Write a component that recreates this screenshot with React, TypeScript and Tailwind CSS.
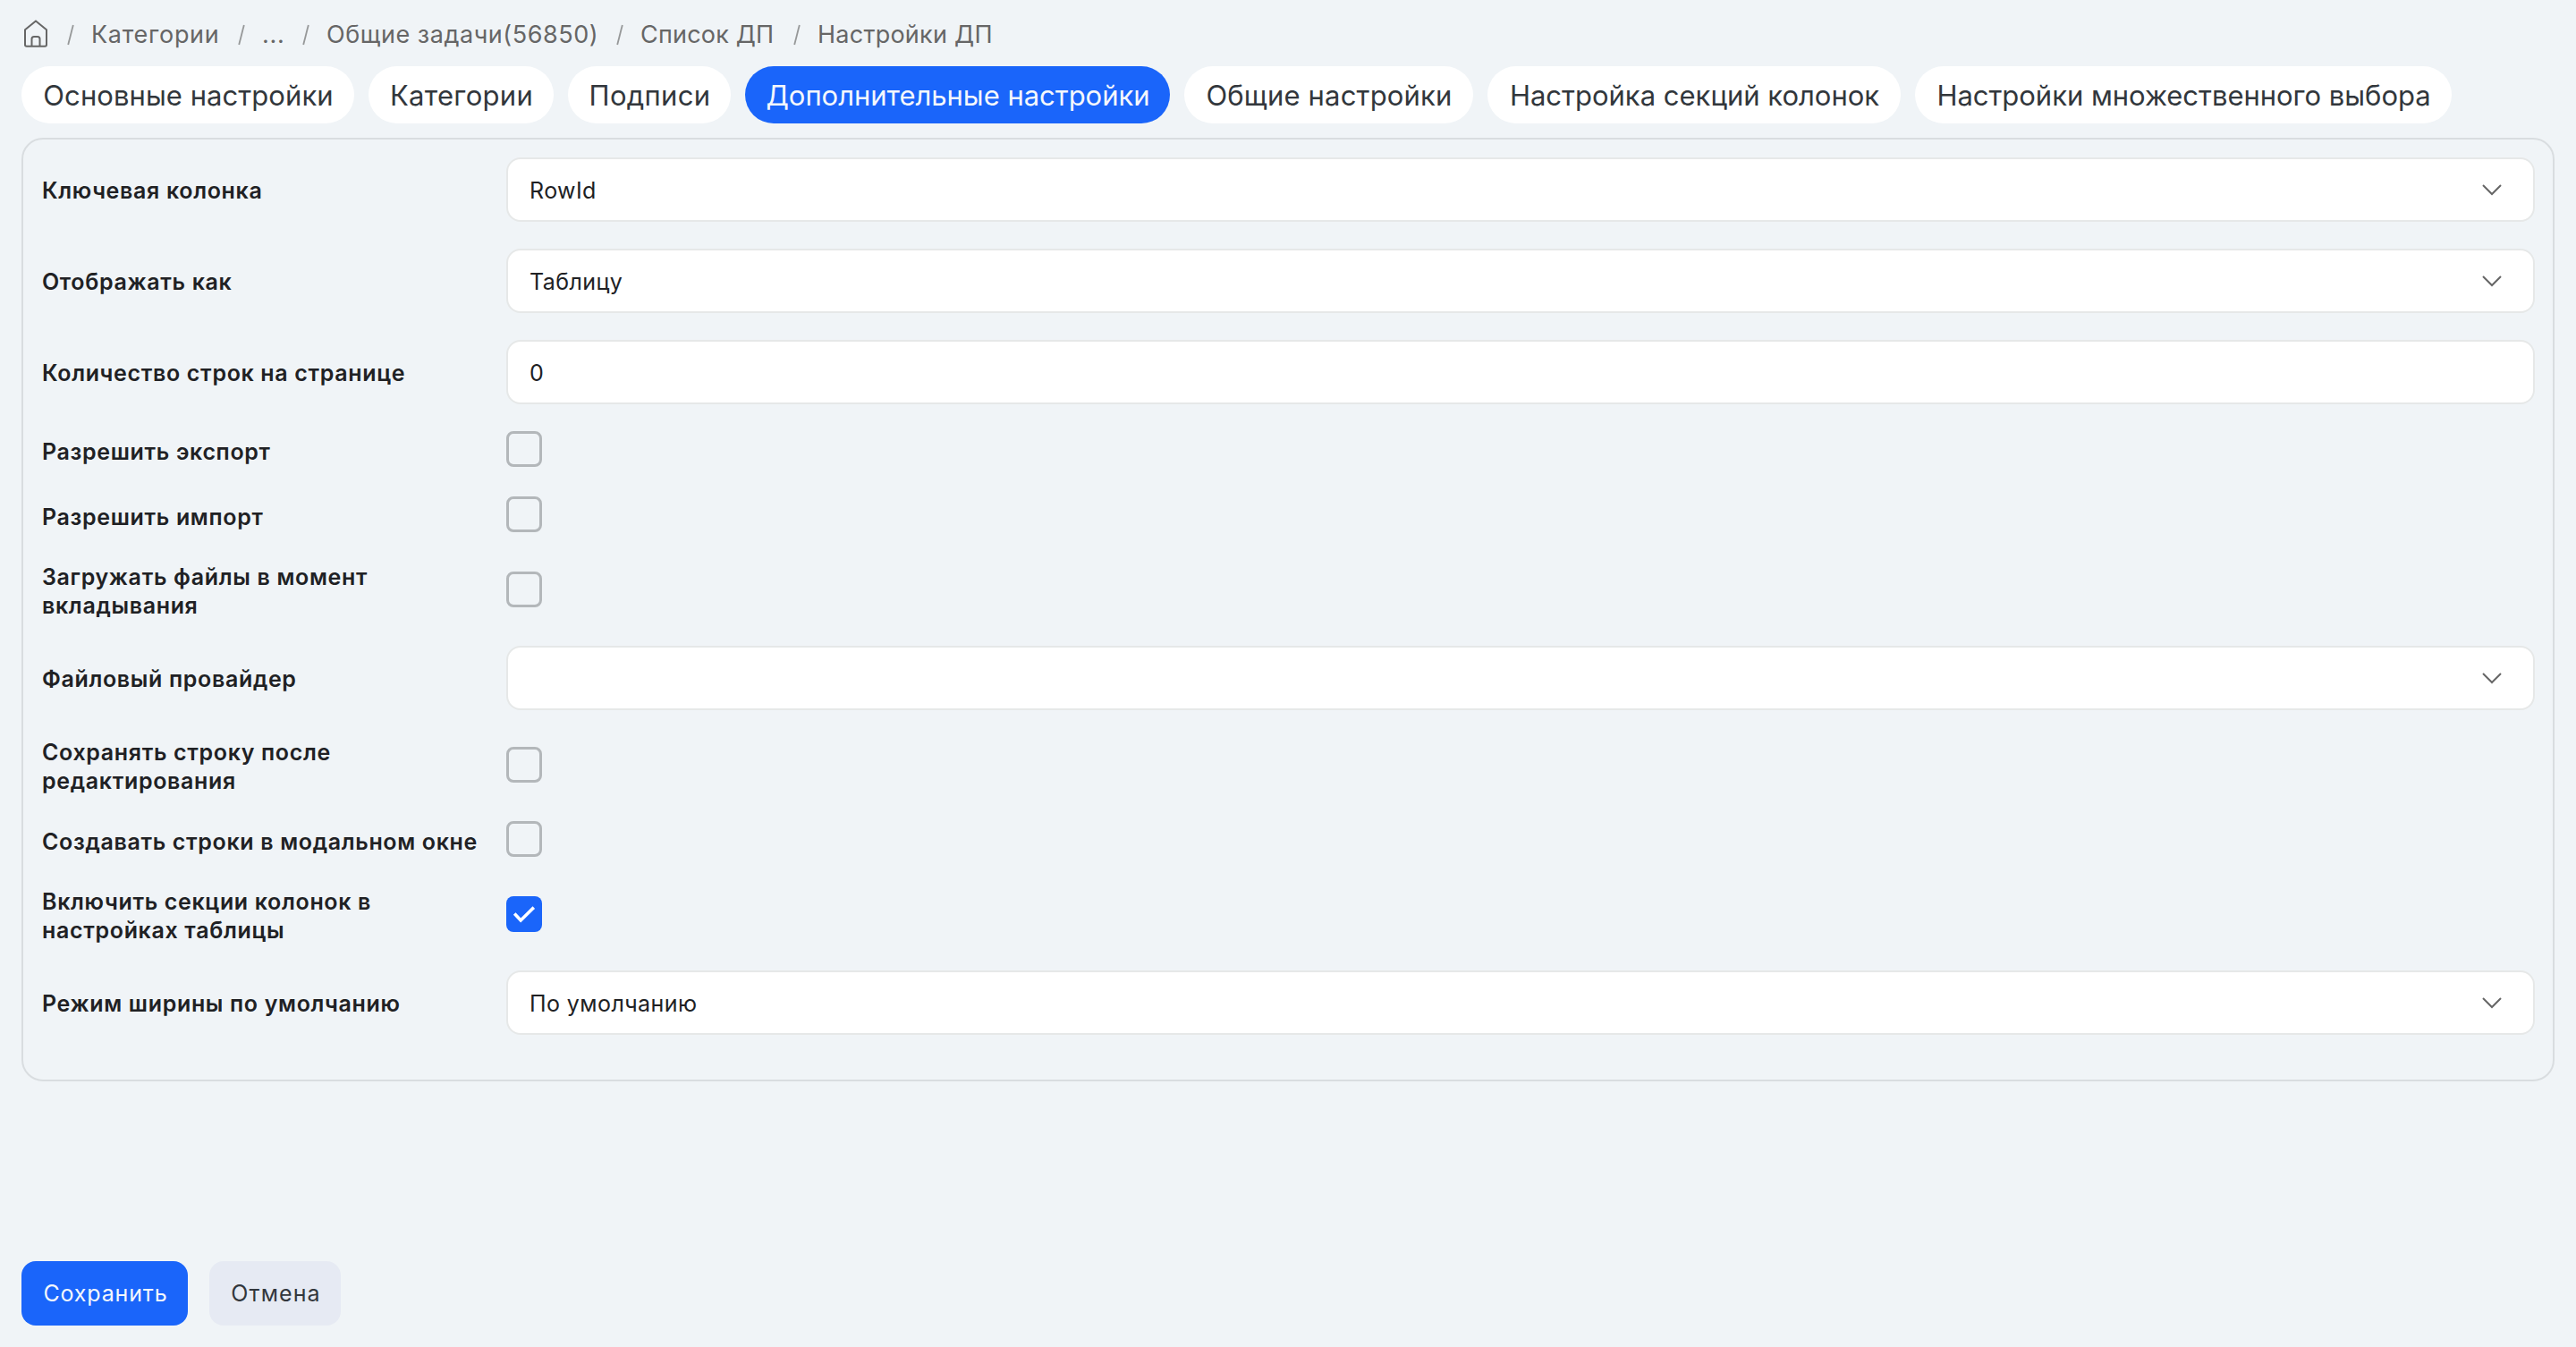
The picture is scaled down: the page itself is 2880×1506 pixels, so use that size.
type Row = {
  label: string;
  type: "select" | "input" | "checkbox";
  value?: string;
  checked?: boolean;
};

const crumbs = [
  { text: "Категории", className: "w-[147px] tracking-[0.7px]" },
  { text: "...", className: "w-[28px] tracking-[0.7px]" },
  { text: "Общие задачи(56850)", className: "w-[307px] tracking-[0.55px]" },
  { text: "Список ДП", className: "w-[154px] tracking-[0.2px]" },
  { text: "Настройки ДП", className: "w-[200px] tracking-[0.25px]" },
];

const tabs = [
  { text: "Основные настройки", className: "w-[372px] tracking-[0.06px]" },
  { text: "Категории", className: "w-[207px] tracking-[0.3px]" },
  { text: "Подписи", className: "w-[182px] tracking-[0.3px]" },
  { text: "Дополнительные настройки", className: "w-[475px] tracking-[-0.03px]", active: true },
  { text: "Общие настройки", className: "w-[323px] tracking-[0.17px]" },
  { text: "Настройка секций колонок", className: "w-[462px]" },
  { text: "Настройки множественного выбора", className: "w-[600px] tracking-[-0.03px]" },
];

const rows: Row[] = [
  { label: "Ключевая колонка", type: "select", value: "RowId" },
  { label: "Отображать как", type: "select", value: "Таблицу" },
  { label: "Количество строк на странице", type: "input", value: "0" },
  { label: "Разрешить экспорт", type: "checkbox" },
  { label: "Разрешить импорт", type: "checkbox" },
  { label: "Загружать файлы в момент вкладывания", type: "checkbox" },
  { label: "Файловый провайдер", type: "select", value: "" },
  { label: "Сохранять строку после редактирования", type: "checkbox" },
  { label: "Создавать строки в модальном окне", type: "checkbox" },
  { label: "Включить секции колонок в настройках таблицы", type: "checkbox", checked: true },
  { label: "Режим ширины по умолчанию", type: "select", value: "По умолчанию" },
];

function HomeIcon() {
  return (
    <svg width="28" height="32" viewBox="0 0 28 32" fill="none" stroke="#666" strokeWidth="2">
      <path d="M2 12.2 14 2.4 26 12.2V29a1.8 1.8 0 0 1-1.8 1.8H3.8A1.8 1.8 0 0 1 2 29Z" strokeLinejoin="round" />
      <path d="M9.5 30.5V22.5a2.5 2.5 0 0 1 2.5-2.5h4a2.5 2.5 0 0 1 2.5 2.5v8" />
    </svg>
  );
}

function Separator() {
  return (
    <svg className="mt-px" width="8" height="24" viewBox="0 0 8 24" fill="none" stroke="#969899" strokeWidth="1.8">
      <path d="M1.2 23 6.8 1" />
    </svg>
  );
}

function Chevron() {
  return (
    <svg width="24" height="14" viewBox="0 0 24 14" fill="none" stroke="#666" strokeWidth="2">
      <path d="M2 2 12 12 22 2" />
    </svg>
  );
}

function Checkbox({ checked }: { checked?: boolean }) {
  if (checked) {
    return (
      <div className="size-10 rounded-lg bg-[#1a65fa]">
        <svg width="40" height="40" viewBox="0 0 40 40" fill="none" stroke="#fff" strokeWidth="3.6">
          <path d="M9.2 19.6 16.2 27 30.8 12.6" />
        </svg>
      </div>
    );
  }
  return <div className="size-10 rounded-lg border-3 border-[#b3b7ba]" />;
}

function Field({ row }: { row: Row }) {
  return (
    <div className="flex h-[72px] items-center justify-between rounded-2xl border-2 border-[#e6e8e8] bg-white pr-[34px] pl-6">
      <span className="pt-1 text-[25px] tracking-[0.42px]">{row.value}</span>
      {row.type === "select" && <Chevron />}
    </div>
  );
}

export default function App() {
  return (
    <div className="flex h-[1506px] w-[2880px] flex-col bg-[#f0f4f7] px-6 font-['Inter',sans-serif] text-[#202124]">
      <nav className="flex h-[74px] items-center pt-0.5 text-[27px] text-[#666]">
        <div className="mr-[21px] pb-0.5 pl-0.5">
          <HomeIcon />
        </div>
        {crumbs.map((c) => (
          <div key={c.text} className="mr-[17px] flex items-center gap-[19px]">
            <Separator />
            <span className={`${c.className} pt-0.5 whitespace-nowrap`}>{c.text}</span>
          </div>
        ))}
      </nav>

      <div className="flex gap-4">
        {tabs.map((t) => (
          <button
            key={t.text}
            className={`${t.className} h-16 rounded-full pt-0.5 pl-px text-[31px] whitespace-nowrap ${
              t.active ? "bg-[#1a65fa] text-[#f4f7fc]" : "bg-white text-[#32373c]"
            }`}
          >
            {t.text}
          </button>
        ))}
      </div>

      <div className="mt-4 flex h-[1055px] w-[2832px] flex-col gap-[30px] rounded-3xl border-2 border-[#d9dde0] px-5 pt-5">
        {rows.map((row) => (
          <div key={row.label} className="flex items-center">
            <div className="mt-px -mb-px w-[520px] pr-5 pl-px text-[25px] leading-8 font-semibold tracking-[0.66px]">
              {row.label}
            </div>
            <div className="flex-1">
              {row.type === "checkbox" ? (
                <div className="h-[43px]">
                  <Checkbox checked={row.checked} />
                </div>
              ) : (
                <Field row={row} />
              )}
            </div>
          </div>
        ))}
      </div>

      <div className="mt-auto mb-6 flex gap-6 text-[25px]">
        <button className="h-[72px] w-[186px] rounded-2xl bg-[#1a65fa] pt-0.5 pl-0.5 tracking-[0.85px] text-[#f4f7fc]">
          Сохранить
        </button>
        <button className="h-[72px] w-[147px] rounded-2xl bg-[#e6eaf3] pt-0.5 pl-0.5 tracking-[1.1px] text-[#32373c]">
          Отмена
        </button>
      </div>
    </div>
  );
}
